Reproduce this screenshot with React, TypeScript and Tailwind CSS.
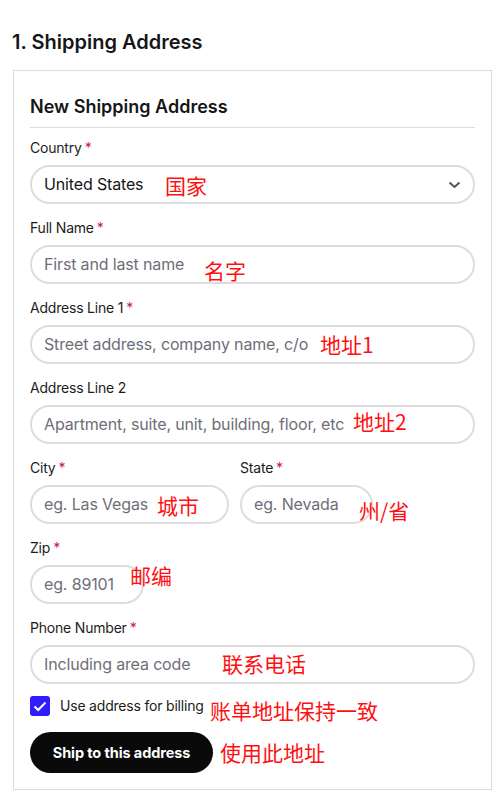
import React from "react";

const ui = { fontFamily: "Inter, 'Liberation Sans', sans-serif" };
const cjk = { fontFamily: "'Noto Sans CJK SC', sans-serif" };

function Label({ text, req }: { text: string; req?: boolean }) {
  return (
    <div className="h-5 leading-5 text-[14px] text-[#1c1c1c] mb-[7px] tracking-[-0.2px]">
      {text}
      {req && <span className="text-[#c2185b] ml-[3px]">*</span>}
    </div>
  );
}

function Input({ placeholder, className = "" }: { placeholder: string; className?: string }) {
  return (
    <div
      className={`h-[39px] rounded-full border-2 border-[#dddddd] flex items-center pl-[12px] text-[16px] tracking-[-0.15px] text-[#6e6e78] whitespace-nowrap overflow-hidden ${className}`}
    >
      <span className="-mt-px">{placeholder}</span>
    </div>
  );
}

function Ann({ text, x, y }: { text: string; x: number; y: number }) {
  return (
    <div
      className="absolute text-[21px] leading-none text-[#ff1010] whitespace-nowrap"
      style={{ ...cjk, left: x, top: y }}
    >
      {text}
    </div>
  );
}

export default function App() {
  return (
    <div className="relative w-[504px] h-[796px] bg-white overflow-hidden" style={ui}>
      <div className="pt-[29px] pl-[13px] pr-[12px]">
        <h1 className="text-[20px] leading-[26px] font-semibold text-[#161616] -ml-[1px]">
          1. Shipping Address
        </h1>
        <div className="mt-[15px] border border-[#dcdcdc] px-4 pt-[24px] pb-[16px]">
          <h2 className="text-[18px] leading-6 font-semibold text-[#161616]">
            New Shipping Address
          </h2>
          <div className="mt-2 h-px bg-[#dddddd]" />
          <div className="mt-[10px] flex flex-col gap-[14px]">
            <div>
              <Label text="Country" req />
              <div className="h-[39px] rounded-full border-2 border-[#dddddd] flex items-center justify-between pl-[12px] pr-[12px] text-[16px] tracking-[-0.15px] text-[#161616]">
                <span className="-mt-px">United States</span>
                <svg width="13" height="8" viewBox="0 0 13 8" fill="none">
                  <path d="M1.5 1.5L6.5 6L11.5 1.5" stroke="#555" strokeWidth="2" />
                </svg>
              </div>
            </div>
            <div>
              <Label text="Full Name" req />
              <Input placeholder="First and last name" />
            </div>
            <div>
              <Label text="Address Line 1" req />
              <Input placeholder="Street address, company name, c/o" />
            </div>
            <div>
              <Label text="Address Line 2" />
              <Input placeholder="Apartment, suite, unit, building, floor, etc" />
            </div>
            <div className="flex gap-[11px]">
              <div className="w-[199px]">
                <Label text="City" req />
                <Input placeholder="eg. Las Vegas" />
              </div>
              <div className="w-[133px]">
                <Label text="State" req />
                <Input placeholder="eg. Nevada" />
              </div>
            </div>
            <div>
              <Label text="Zip" req />
              <Input placeholder="eg. 89101" className="w-[114px]" />
            </div>
            <div>
              <Label text="Phone Number" req />
              <Input placeholder="Including area code" />
            </div>
          </div>
          <div className="mt-[12px] flex items-center h-5">
            <div className="w-5 h-5 rounded-[3px] bg-[#2f1cff] flex items-center justify-center">
              <svg width="14" height="11" viewBox="0 0 14 11" fill="none">
                <path d="M1.5 5.5L5.2 9L12.5 1.5" stroke="white" strokeWidth="2" />
              </svg>
            </div>
            <span className="ml-[10px] text-[14px] text-[#1c1c1c] tracking-[-0.2px] -mt-[2px]">
              Use address for billing
            </span>
          </div>
          <button className="mt-4 h-[41px] w-[183px] rounded-full bg-[#0a0a0a] text-white text-[14.5px] font-bold tracking-[-0.1px]">
            Ship to this address
          </button>
        </div>
      </div>

      <Ann text="国家" x={165} y={175} />
      <Ann text="名字" x={204} y={260} />
      <Ann text="地址1" x={320} y={334} />
      <Ann text="地址2" x={353} y={411} />
      <Ann text="城市" x={157} y={495} />
      <Ann text="州/省" x={359} y={500} />
      <Ann text="邮编" x={130} y={565} />
      <Ann text="联系电话" x={222} y={653} />
      <Ann text="账单地址保持一致" x={210} y={700} />
      <Ann text="使用此地址" x={220} y={742} />
    </div>
  );
}
